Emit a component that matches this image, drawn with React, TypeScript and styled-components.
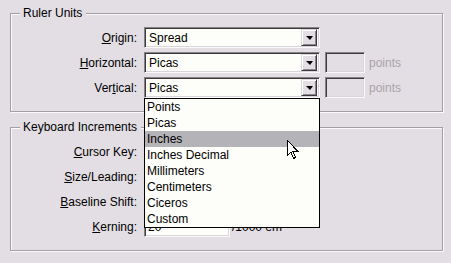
import React from 'react'
import styled, { createGlobalStyle } from 'styled-components'

const GlobalStyle = createGlobalStyle`
   html, body {
      margin: 0;
      padding: 0;
      background: #e3dee4;
   }
   body {
      font-family: 'Liberation Sans', Arial, sans-serif;
      font-size: 12px;
      color: #000;
   }
`

const Page = styled.div`
   width: 451px;
   height: 263px;
   box-sizing: border-box;
   padding: 13px 0 0 10px;
   background: #e3dee4;
   overflow: hidden;
`

const Group = styled.div<{ $mt?: number }>`
   position: relative;
   width: 431px;
   margin-top: ${(p) => p.$mt || 0}px;
   padding: 13px 0;
   border: 1px solid #a29ea3;
   box-shadow: inset 1px 1px 0 #fbf9fb, 1px 1px 0 #fbf9fb;
   display: flex;
   flex-direction: column;
   gap: 4px;
`

const Legend = styled.span`
   position: absolute;
   left: 9px;
   top: -8px;
   padding: 0 4px 0 3px;
   line-height: 14px;
   background: #e3dee4;
`

const Row = styled.div`
   display: flex;
   align-items: center;
   height: 21px;
`

const Label = styled.label`
   width: 126px;
   margin-right: 7px;
   text-align: right;
   white-space: nowrap;

   u {
      text-decoration: underline;
      text-underline-offset: 1px;
   }
`

const SelectWrap = styled.div`
   position: relative;
   width: 176px;
   height: 21px;
`

const SelectBox = styled.div`
   box-sizing: border-box;
   width: 100%;
   height: 100%;
   display: flex;
   align-items: center;
   padding: 0 2px 0 3px;
   background: #fdfdf9;
   border: 1px solid;
   border-color: #868286 #fbf9fb #fbf9fb #868286;
   box-shadow: inset 1px 1px 0 #3c3a3c, inset -1px -1px 0 #d9d5da;
`

const SelectText = styled.span`
   flex: 1;
   padding-left: 1px;
`

const DropButton = styled.span`
   box-sizing: border-box;
   width: 16px;
   height: 17px;
   display: flex;
   align-items: center;
   justify-content: center;
   background: #e3dee4;
   border: 1px solid;
   border-color: #dcd8dc #3c3a3c #3c3a3c #dcd8dc;
   box-shadow: inset 1px 1px 0 #fff, inset -1px -1px 0 #8a868a;

   &::after {
      content: '';
      width: 0;
      height: 0;
      margin-top: 1px;
      border-left: 4px solid transparent;
      border-right: 3px solid transparent;
      border-top: 4px solid #000;
   }
`

const SmallField = styled.div`
   box-sizing: border-box;
   width: 40px;
   height: 21px;
   margin-left: 5px;
   border: 1px solid;
   border-color: #868286 #fbf9fb #fbf9fb #868286;
   box-shadow: inset 1px 1px 0 #3c3a3c, inset -1px -1px 0 #d9d5da;
`

const Unit = styled.span<{ $disabled?: boolean }>`
   margin-left: ${(p) => (p.$disabled ? 4 : 2)}px;
   color: ${(p) => (p.$disabled ? '#a8a4a8' : '#000')};
`

const TextField = styled.div`
   box-sizing: border-box;
   width: 86px;
   height: 21px;
   display: flex;
   align-items: center;
   padding-left: 3px;
   background: #fdfdf9;
   border: 1px solid;
   border-color: #868286 #fbf9fb #fbf9fb #868286;
   box-shadow: inset 1px 1px 0 #3c3a3c, inset -1px -1px 0 #d9d5da;
`

const List = styled.ul`
   position: absolute;
   z-index: 10;
   left: 0;
   top: 21px;
   width: 176px;
   margin: 0;
   padding: 0;
   list-style: none;
   background: #fdfdf9;
   border: 1px solid #000;
   box-sizing: border-box;
`

const Item = styled.li<{ $active?: boolean }>`
   height: 16px;
   line-height: 16px;
   padding-left: 2px;
   background: ${(p) => (p.$active ? '#b4b3b8' : 'transparent')};
`

const Pointer = styled.svg`
   position: absolute;
   left: 142px;
   top: 41px;
`

const units = [
   'Points',
   'Picas',
   'Inches',
   'Inches Decimal',
   'Millimeters',
   'Centimeters',
   'Ciceros',
   'Custom',
]

const Select = ({ value, open }: { value: string; open?: boolean }) => (
   <SelectWrap>
      <SelectBox>
         <SelectText>{value}</SelectText>
         <DropButton />
      </SelectBox>
      {open && (
         <List>
            {units.map((u) => (
               <Item key={u} $active={u === 'Inches'}>
                  {u}
               </Item>
            ))}
            <Pointer width="13" height="20" viewBox="0 0 13 20">
               <path
                  d="M0.5 0.5 L0.5 15.5 L4 12 L6.5 18.5 L8.5 17.5 L6 11.5 L11 11.5 Z"
                  fill="#fff"
                  stroke="#000"
                  strokeWidth="1"
                  shapeRendering="crispEdges"
               />
            </Pointer>
         </List>
      )}
   </SelectWrap>
)

export default function App() {
   return (
      <Page>
         <GlobalStyle />
         <Group>
            <Legend>Ruler Units</Legend>
            <Row>
               <Label>
                  <u>O</u>rigin:
               </Label>
               <Select value="Spread" />
            </Row>
            <Row>
               <Label>
                  <u>H</u>orizontal:
               </Label>
               <Select value="Picas" />
               <SmallField />
               <Unit $disabled>points</Unit>
            </Row>
            <Row>
               <Label>
                  Ver<u>t</u>ical:
               </Label>
               <Select value="Picas" open />
               <SmallField />
               <Unit $disabled>points</Unit>
            </Row>
         </Group>

         <Group $mt={15}>
            <Legend>Keyboard Increments</Legend>
            {/* fields under the open list are hidden in the shot, so left blank */}
            <Row>
               <Label>
                  <u>C</u>ursor Key:
               </Label>
               <TextField />
            </Row>
            <Row>
               <Label>
                  <u>S</u>ize/Leading:
               </Label>
               <TextField />
            </Row>
            <Row>
               <Label>
                  <u>B</u>aseline Shift:
               </Label>
               <TextField />
            </Row>
            <Row>
               <Label>
                  <u>K</u>erning:
               </Label>
               <TextField>20</TextField>
               <Unit>/1000 em</Unit>
            </Row>
         </Group>
      </Page>
   )
}
